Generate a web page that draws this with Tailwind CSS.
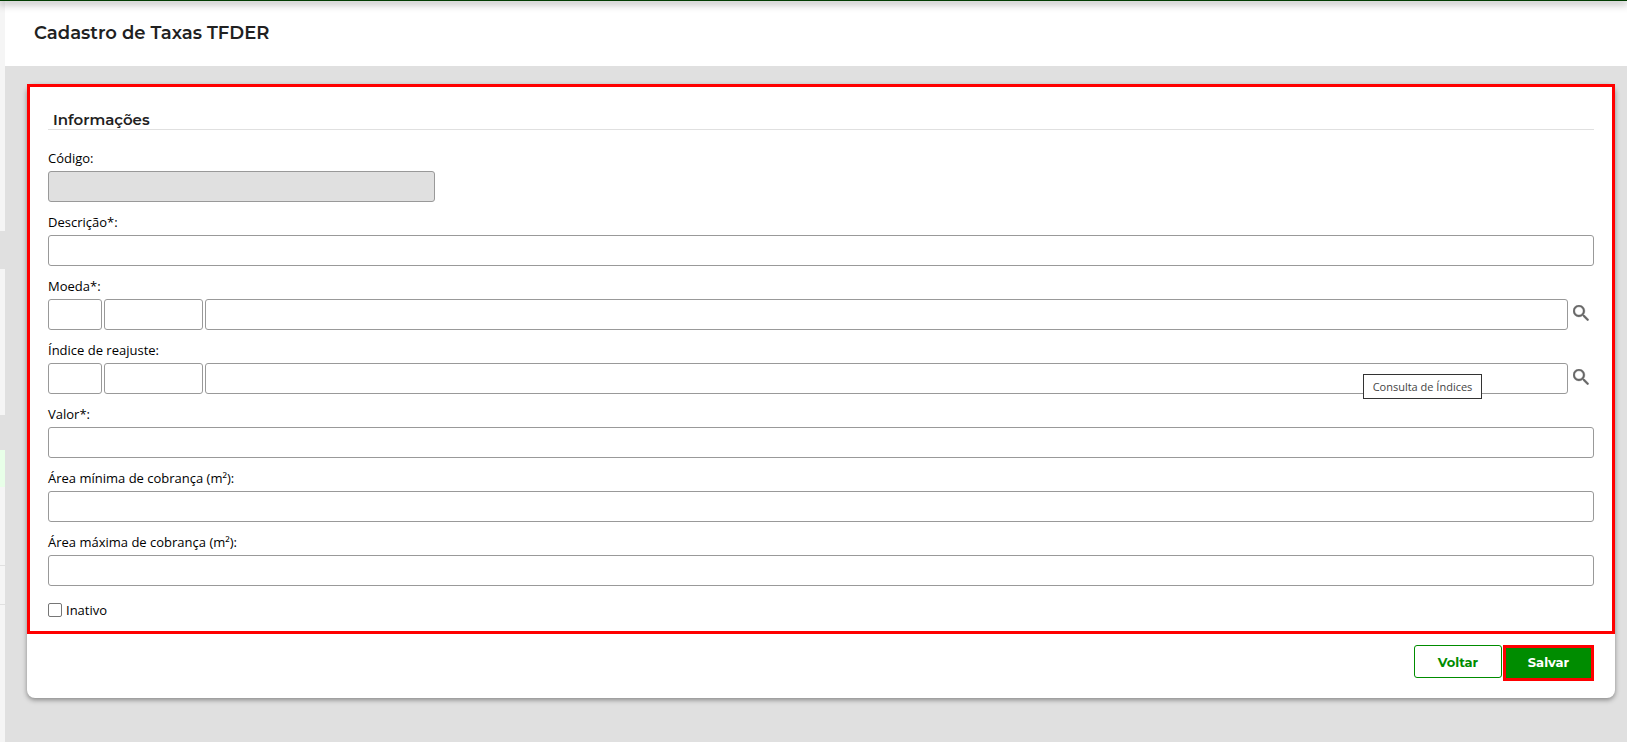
<!DOCTYPE html>
<html lang="pt-BR">
<head>
  <meta charset="UTF-8" />
  <meta name="viewport" content="width=device-width, initial-scale=1.0"/>
  <title>Cadastro de Taxas TFDER</title>
  <script src="https://cdn.jsdelivr.net/npm/@tailwindcss/browser@4"></script>
</head>
<body class="min-h-screen flex flex-col bg-[#e0e0e0] text-[13px] leading-5 text-black font-['Open_Sans','Noto_Sans',sans-serif]">
  <!-- Top bar -->
  <div class="relative z-10 h-px bg-[#003c00] shadow-[0_1px_8px_1px_rgba(0,0,0,0.55)]"></div>

  <div class="flex flex-1">
    <!-- Side menu edge -->
    <aside class="w-[5px] shrink-0 flex flex-col">
      <div class="h-[230px] bg-[#f5f5f5]"></div>
      <div class="h-[146px] mt-[38px] bg-[#f5f5f5]"></div>
      <div class="h-[37px] mt-[35px] bg-[#e8ffe8]"></div>
      <div class="h-[79px] bg-[#f5f5f5] border-b border-[#e0e0e0]"></div>
      <div class="h-[39px] bg-[#f5f5f5] border-b border-[#e0e0e0]"></div>
      <div class="flex-1 bg-[#f5f5f5]"></div>
    </aside>

    <div class="flex-1 min-w-0">
      <header class="h-[65px] px-[29px] flex items-center bg-white">
        <h1 class="text-[18px] leading-6 pb-px font-semibold text-[#212121] font-['Montserrat','Inter',sans-serif]">Cadastro de Taxas TFDER</h1>
      </header>

      <main class="pt-[18px] pl-[22px] pr-3">
        <form class="bg-white rounded-lg shadow-[0_2px_5px_rgba(0,0,0,0.4)]" onsubmit="return false">
          <!-- Fields -->
          <section class="border-3 border-[#ff0000] px-[18px] pt-[23px] pb-[11px]">
            <h2 class="h-5 px-[5px] border-b border-[#e0e0e0] text-[15px] font-semibold text-[#212121] font-['Montserrat','Inter',sans-serif]">Informações</h2>

            <div class="mt-[18px] flex flex-col gap-[10px]">
              <div>
                <label for="codigo" class="block">Código:</label>
                <input id="codigo" type="text" disabled class="mt-[3px] block w-1/4 h-[31px] px-2 border border-[#999] rounded-[3px] bg-[#e0e0e0]"/>
              </div>
              <div>
                <label for="descricao" class="block">Descrição*:</label>
                <input id="descricao" type="text" class="mt-[3px] block w-full h-[31px] px-2 border border-[#999] rounded-[3px]"/>
              </div>
              <div>
                <label for="moeda" class="block">Moeda*:</label>
                <div class="mt-[3px] flex items-start gap-[2px]">
                  <input id="moeda" type="text" class="w-[54px] h-[31px] px-2 border border-[#999] rounded-[3px]"/>
                  <input type="text" aria-label="Sigla da moeda" class="w-[99px] h-[31px] px-2 border border-[#999] rounded-[3px]"/>
                  <input type="text" aria-label="Nome da moeda" class="flex-1 min-w-0 h-[31px] px-2 border border-[#999] rounded-[3px]"/>
                  <button type="button" aria-label="Consulta de Moedas" class="w-6 h-7 pl-[3px] flex items-center text-[#666]">
                    <svg viewBox="3 3 17.5 17.5" class="w-4 h-4" fill="currentColor" stroke="currentColor" stroke-width="0.4"><path d="M15.5 14h-.79l-.28-.27A6.47 6.47 0 0 0 16 9.5 6.5 6.5 0 1 0 9.5 16c1.61 0 3.09-.59 4.23-1.57l.27.28v.79l5 4.99L20.49 19l-4.99-5zm-6 0C7.01 14 5 11.99 5 9.5S7.01 5 9.5 5 14 7.01 14 9.5 11.99 14 9.5 14z"/></svg>
                  </button>
                </div>
              </div>
              <div>
                <label for="indice" class="block">Índice de reajuste:</label>
                <div class="relative mt-[3px] flex items-start gap-[2px]">
                  <input id="indice" type="text" class="w-[54px] h-[31px] px-2 border border-[#999] rounded-[3px]"/>
                  <input type="text" aria-label="Sigla do índice" class="w-[99px] h-[31px] px-2 border border-[#999] rounded-[3px]"/>
                  <input type="text" aria-label="Nome do índice" class="flex-1 min-w-0 h-[31px] px-2 border border-[#999] rounded-[3px]"/>
                  <button type="button" aria-describedby="dica" aria-label="Consulta de Índices" class="w-6 h-7 pl-[3px] flex items-center text-[#666]">
                    <svg viewBox="3 3 17.5 17.5" class="w-4 h-4" fill="currentColor" stroke="currentColor" stroke-width="0.4"><path d="M15.5 14h-.79l-.28-.27A6.47 6.47 0 0 0 16 9.5 6.5 6.5 0 1 0 9.5 16c1.61 0 3.09-.59 4.23-1.57l.27.28v.79l5 4.99L20.49 19l-4.99-5zm-6 0C7.01 14 5 11.99 5 9.5S7.01 5 9.5 5 14 7.01 14 9.5 11.99 14 9.5 14z"/></svg>
                  </button>
                  <span id="dica" role="tooltip" class="absolute top-[11px] right-28 w-[119px] h-[25px] flex items-center justify-center border border-[#333] bg-white text-[11px] text-[#444] whitespace-nowrap">Consulta de Índices</span>
                </div>
              </div>
              <div>
                <label for="valor" class="block">Valor*:</label>
                <input id="valor" type="text" class="mt-[3px] block w-full h-[31px] px-2 border border-[#999] rounded-[3px]"/>
              </div>
              <div>
                <label for="area-min" class="block">Área mínima de cobrança (m²):</label>
                <input id="area-min" type="text" class="mt-[3px] block w-full h-[31px] px-2 border border-[#999] rounded-[3px]"/>
              </div>
              <div>
                <label for="area-max" class="block">Área máxima de cobrança (m²):</label>
                <input id="area-max" type="text" class="mt-[3px] block w-full h-[31px] px-2 border border-[#999] rounded-[3px]"/>
              </div>
              <div class="mt-1 flex items-center gap-1">
                <input id="inativo" type="checkbox" class="w-[14px] h-[14px] appearance-none border border-[#767676] rounded-[2px] bg-white checked:bg-[#008c00]"/>
                <label for="inativo">Inativo</label>
              </div>
            </div>
          </section>

          <!-- Actions -->
          <div class="flex items-start justify-end gap-px pt-[11px] pb-[17px] pr-[21px] text-[13px] font-bold font-['Montserrat','Inter',sans-serif]">
            <button type="button" class="w-[88px] h-[33px] border border-[#008c00] rounded-[3px] bg-white text-[#008c00]">Voltar</button>
            <button type="submit" class="w-[91px] h-9 pb-[3px] border-3 border-[#ff0000] bg-[#008c00] text-white">Salvar</button>
          </div>
        </form>
      </main>
    </div>
  </div>
</body>
</html>
